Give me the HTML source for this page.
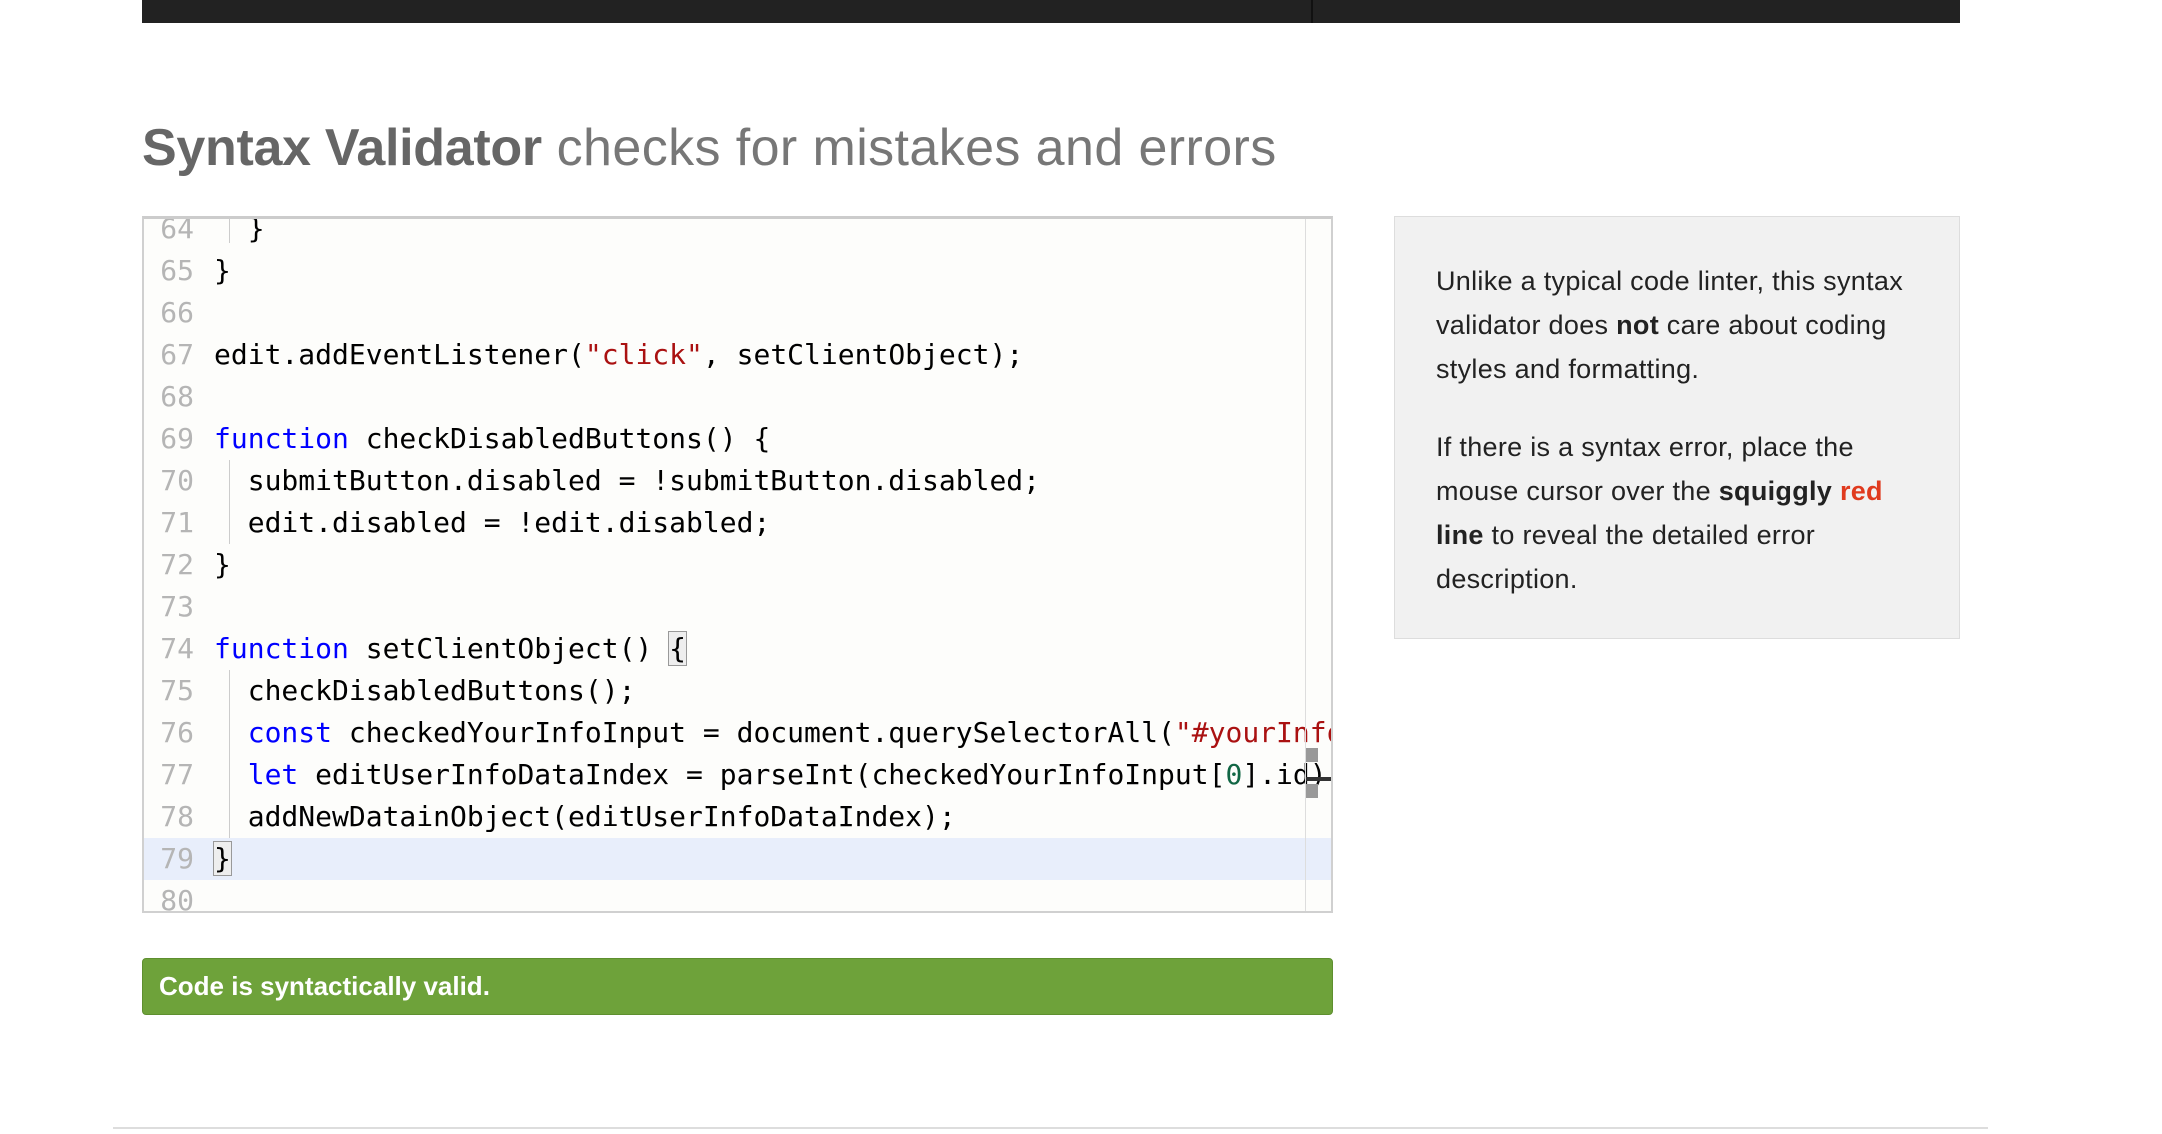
<!DOCTYPE html>
<html><head><meta charset="utf-8"><style>
*{margin:0;padding:0;box-sizing:border-box}
body{width:2162px;height:1134px;background:#fff;position:relative;overflow:hidden;font-family:"Liberation Sans",Arial,sans-serif}
.topbar{position:absolute;left:142px;top:0;width:1818px;height:23px;background:#222}
.topbar i{position:absolute;left:1169px;top:0;width:2px;height:23px;background:#111}
h1{position:absolute;left:142px;top:118px;font-size:52px;font-weight:normal;color:#777;white-space:nowrap;letter-spacing:0.4px}
h1 b{color:#666;letter-spacing:-0.3px}
.ed{position:absolute;left:142px;top:216px;width:1191px;height:697px;border:2px solid #d0d0d0;border-top:3px solid #ccc;background:#fdfdfb;overflow:hidden}
.track{position:absolute;left:1161px;top:0;width:1px;height:100%;background:#ddd}
.row{position:absolute;left:0;height:42px;width:100%;font-family:"DejaVu Sans Mono","Liberation Mono",monospace;font-size:28px;line-height:42px;white-space:pre;color:#000}
.row .n{position:absolute;left:0;width:50px;text-align:right;color:#b5b5b5}
.row .c{position:absolute;left:70px}
.hl{background:#e8eefb}
.k{color:#00f}.s{color:#a11}.d{color:#164}
.g{position:absolute;left:85px;width:1px;background:#ccc}
.mb{outline:1px solid #999;background:#eee}
.ok{position:absolute;left:142px;top:958px;width:1191px;height:57px;background:#6ea23a;border:1px solid #5e8f2f;border-radius:4px;color:#fff;font-weight:bold;font-size:26px;line-height:55px;padding-left:16px}
.side{position:absolute;left:1394px;top:216px;width:566px;height:423px;background:#f1f1f1;border:1px solid #ddd;padding:42px 40px 0 41px;font-size:27px;letter-spacing:0.3px;line-height:44px;color:#222}
.side p{margin-bottom:34px}
.side .r{color:#e03a1e;font-weight:bold}
.hr{position:absolute;left:113px;top:1127px;width:1875px;height:2px;background:#ddd}
</style></head><body>
<div class="topbar"><i></i></div>
<h1><b>Syntax Validator</b> checks for mistakes and errors</h1>
<div class="ed">
<div class="track"></div>
<div class="row" style="top:-11px"><span class="n">64</span><span class="c">  }</span></div>
<div class="row" style="top:31px"><span class="n">65</span><span class="c">}</span></div>
<div class="row" style="top:73px"><span class="n">66</span><span class="c"></span></div>
<div class="row" style="top:115px"><span class="n">67</span><span class="c">edit.addEventListener(<span class="s">"click"</span>, setClientObject);</span></div>
<div class="row" style="top:157px"><span class="n">68</span><span class="c"></span></div>
<div class="row" style="top:199px"><span class="n">69</span><span class="c"><span class="k">function</span> checkDisabledButtons() {</span></div>
<div class="row" style="top:241px"><span class="n">70</span><span class="c">  submitButton.disabled = !submitButton.disabled;</span></div>
<div class="row" style="top:283px"><span class="n">71</span><span class="c">  edit.disabled = !edit.disabled;</span></div>
<div class="row" style="top:325px"><span class="n">72</span><span class="c">}</span></div>
<div class="row" style="top:367px"><span class="n">73</span><span class="c"></span></div>
<div class="row" style="top:409px"><span class="n">74</span><span class="c"><span class="k">function</span> setClientObject() <span class="mb">{</span></span></div>
<div class="row" style="top:451px"><span class="n">75</span><span class="c">  checkDisabledButtons();</span></div>
<div class="row" style="top:493px"><span class="n">76</span><span class="c">  <span class="k">const</span> checkedYourInfoInput = document.querySelectorAll(<span class="s">"#yourInfo</span></span></div>
<div class="row" style="top:535px"><span class="n">77</span><span class="c">  <span class="k">let</span> editUserInfoDataIndex = parseInt(checkedYourInfoInput[<span class="d">0</span>].id);</span></div>
<div class="row" style="top:577px"><span class="n">78</span><span class="c">  addNewDatainObject(editUserInfoDataIndex);</span></div>
<div class="row hl" style="top:619px"><span class="n">79</span><span class="c"><span class="mb">}</span></span></div>
<div class="row" style="top:661px"><span class="n">80</span><span class="c"></span></div>
<div class="g" style="top:0;height:24px"></div>
<div class="g" style="top:241px;height:84px"></div>
<div class="g" style="top:451px;height:168px"></div>
<div class="track"></div>
<div style="position:absolute;left:1162px;top:529px;width:12px;height:14px;background:#999"></div>
<div style="position:absolute;left:1162px;top:565px;width:12px;height:14px;background:#999"></div>
<div style="position:absolute;left:1162px;top:558px;width:28px;height:4px;background:#333"></div>
</div>
<div class="ok">Code is syntactically valid.</div>
<div class="side">
<p>Unlike a typical code linter, this syntax validator does <b>not</b> care about coding styles and formatting.</p>
<p>If there is a syntax error, place the mouse cursor over the <b>squiggly</b> <span class="r">red</span> <b>line</b> to reveal the detailed error description.</p>
</div>
<div class="hr"></div>
</body></html>
